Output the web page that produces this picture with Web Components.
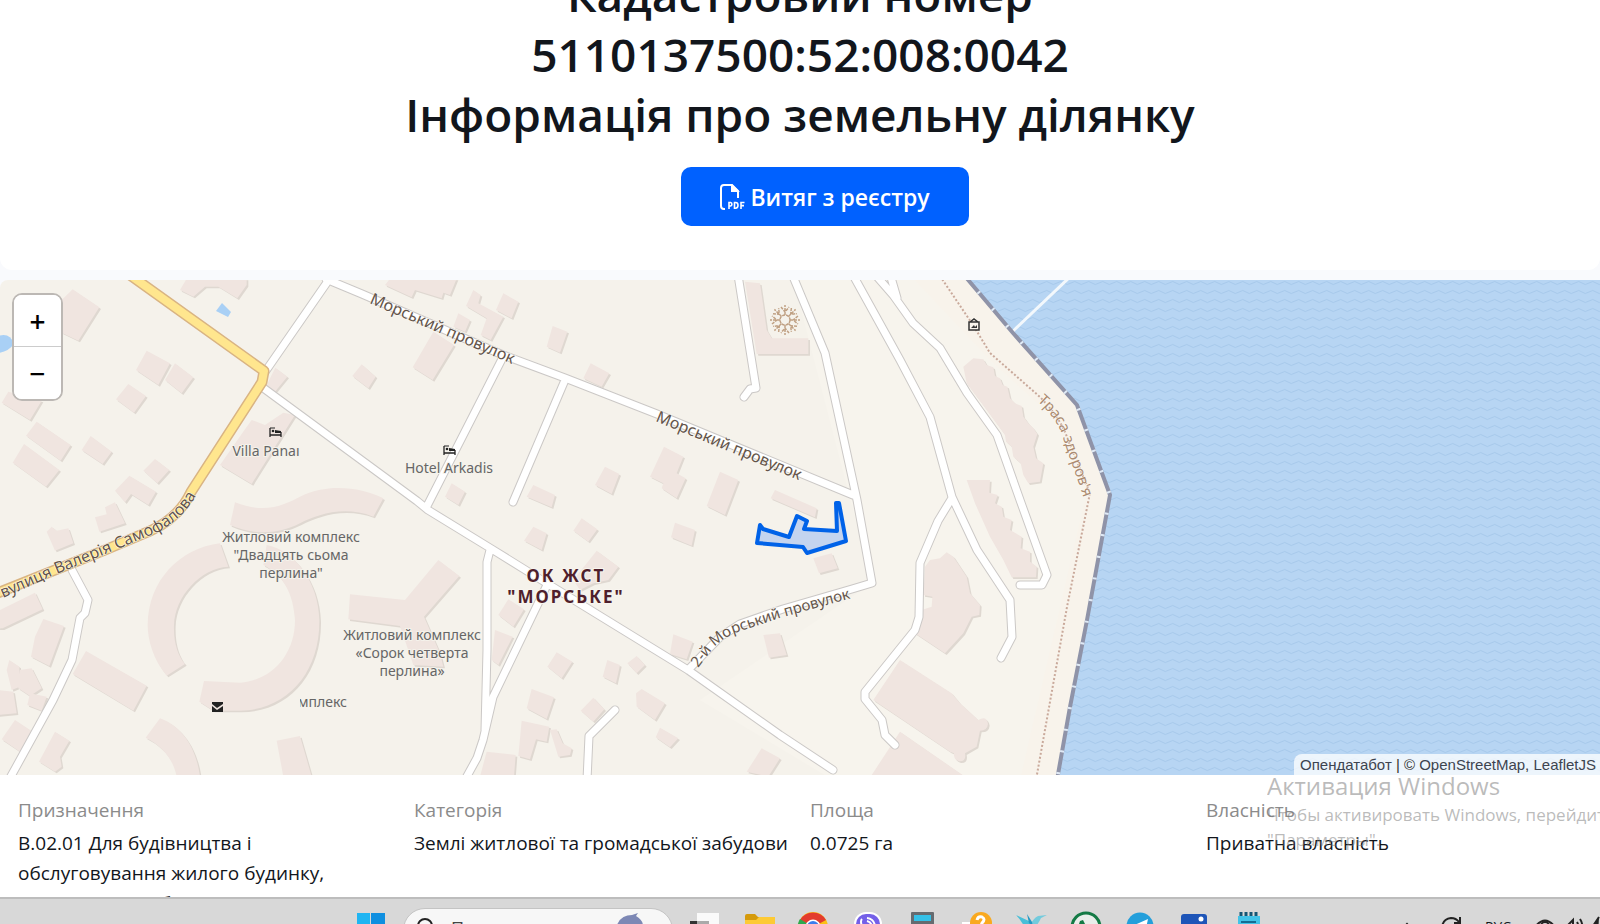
<!DOCTYPE html>
<html lang="uk">
<head>
<meta charset="utf-8">
<meta name="viewport" content="width=device-width, initial-scale=1">
<title>Кадастровий номер 5110137500:52:008:0042</title>
<style>
    body {
        margin: 0;
        height: 100vh;
        overflow: hidden;
        display: flex;
        flex-direction: column;
        background: #fff;
        color: #12161c;
        font-family: "Open Sans", "Noto Sans", sans-serif;
    }
    main {
        flex: 1;
        min-height: 0;
        overflow: hidden;
        background: #f9fafd;
    }
</style>
</head>
<body>
<main>
    <parcel-header>
        <span slot="title">Кадастровий номер<br>5110137500:52:008:0042<br>Інформація про земельну ділянку</span>
        <span slot="action">Витяг з реєстру</span>
    </parcel-header>
    <parcel-map></parcel-map>
    <info-grid>
        <info-item label="Призначення">В.02.01 Для будівництва і обслуговування жилого будинку, господарських будівель і споруд</info-item>
        <info-item label="Категорія">Землі житлової та громадської забудови</info-item>
        <info-item label="Площа">0.0725 га</info-item>
        <info-item label="Власність">Приватна власність</info-item>
    </info-grid>
</main>
<activation-notice></activation-notice>
<task-bar></task-bar>

<script>
class ParcelHeader extends HTMLElement {
    constructor() {
        super();
        this.attachShadow({ mode: 'open' });
    }

    connectedCallback() {
        this.shadowRoot.innerHTML = `
            <style>
                :host {
                    display: flex;
                    flex-direction: column;
                    align-items: center;
                    padding-bottom: 44px;
                    margin-bottom: 10px;
                    background: #fff;
                    border-radius: 0 0 12px 12px;
                }
                h1 {
                    margin: -36px 0 23px;
                    font-size: 46px;
                    line-height: 60px;
                    font-weight: 600;
                    text-align: center;
                }
                button {
                    display: flex;
                    align-items: center;
                    gap: 5px;
                    margin-left: 50px;
                    padding: 0 39px;
                    height: 59px;
                    border: 0;
                    border-radius: 10px;
                    background: #0061ff;
                    color: #fff;
                    font: 600 23px "Open Sans", "Noto Sans", sans-serif;
                }
                svg { width: 25px; height: 26px; }
            </style>
            <h1><slot name="title"></slot></h1>
            <button type="button">
                <svg viewBox="0 0 25 26" fill="none" stroke="#fff" stroke-width="2" aria-hidden="true">
                    <path d="M5 25H4Q1 25 1 22V4Q1 1 4 1H12L18 7V14M12 1V7H18"/>
                    <path d="M12 1.500L17.500 7H12Z" fill="#fff"/>
                    <path stroke-width="1.600" d="M9 25V18.500H10.500A1.800 1.800 0 0 1 10.500 22H9M14.500 18.500V24.200H15.500Q18 24.200 18 21.300T15.500 18.500ZM21 25V18.500H24.500M21 21.600H24"/>
                </svg>
                <slot name="action"></slot>
            </button>
        `;
    }
}

customElements.define('parcel-header', ParcelHeader);

class ZoomControl extends HTMLElement {
    constructor() {
        super();
        this.attachShadow({ mode: 'open' });
    }

    connectedCallback() {
        this.shadowRoot.innerHTML = `
            <style>
                :host {
                    display: flex;
                    flex-direction: column;
                    border: 2px solid #bcb8b4;
                    border-radius: 10px;
                    background: #fff;
                    overflow: hidden;
                }
                button {
                    width: 47px;
                    height: 52px;
                    padding: 0;
                    border: 0;
                    background: #fff;
                    color: #000;
                    font: 600 28px/46px "Open Sans", "Noto Sans", sans-serif;
                }
                button:first-of-type { border-bottom: 1px solid #ccc; }
            </style>
            <button type="button" aria-label="Збільшити">+</button>
            <button type="button" aria-label="Зменшити">−</button>
        `;
    }
}

customElements.define('zoom-control', ZoomControl);

// Building outlines, grouped by tile. Points are in tile units, three per map unit.
const tiles = [
    { x: 0, y: 270, shapes: [
        'M218 58L298 112L235 212L185 188V90Z',
        'M440 242L510 280L475 345L408 300Z',
        'M525 280L580 322L545 370L495 330Z',
        'M385 342L438 378L402 428L348 388Z',
        'M25 365L125 392L90 450L5 398Z',
        'M110 455L212 525L182 572L78 497Z',
        'M72 522L178 600L138 650L38 578Z',
        'M272 498L335 545L308 582L245 540Z',
        'M465 567L508 600L472 640L430 602Z',
        'M388 617L468 665L445 705L393 672L375 697L345 662Z',
        'M345 697L375 760L298 785L285 742L320 733L315 712Z',
        'M560 26H740V45L712 85L655 50L615 50L580 80L540 60Z',
        'M826 293L862 320L825 365L800 345Z',
        'M1085 283L1127 320L1105 355L1057 318Z',
        'M735 478L755 450L795 465L850 428L885 435L755 642L660 585Z',
        'M705 697C800 735 860 700 900 680C980 640 1080 650 1150 685L1120 740C1030 705 950 735 900 760C830 795 760 795 690 765Z'
    ] },
    { x: 360, y: 270, shapes: [
        'M90 26H290L270 75L250 68L245 85L165 60L155 82L75 45Z',
        'M430 70L475 95L455 145L408 120Z',
        'M340 60L362 75L355 100L430 140L392 210L362 195L380 145L318 108Z',
        'M295 130L330 150L315 185L280 170Z',
        'M220 185L282 225L218 330L158 292Z',
        'M578 168L622 185L600 248L560 230Z',
        'M692 280L748 310L725 350L670 325Z',
        'M912 530L970 560L950 610L977 625L950 685L905 655L910 640L870 620Z',
        'M735 590L778 612L755 672L705 645Z',
        'M1080 605L1135 630L1095 735L1040 708Z',
        'M520 645L585 675L575 712L500 680Z',
        'M275 640L315 665L295 705L255 680Z'
    ] },
    { x: 700, y: 270, shapes: [
        'M135 35L180 40L200 180L215 205H325V252H170Z',
        'M225 660L350 715L345 742L212 685Z',
        'M820 265L850 268L860 285L880 292L885 318L900 325L908 345L922 350L930 385L945 400L965 408L970 440L985 460L1000 475L1012 492L1000 530L1008 565L1030 580L1020 635L985 640L970 615L962 580L940 560L935 530L918 515L915 495L860 420L800 340L790 290Z',
        'M800 630H870L868 668L893 675L885 700L905 710L910 740L935 750L930 780L965 800L962 835L990 845V875L1010 890L1008 922H935L910 870L870 800L825 700Z'
    ] },
    { x: 0, y: 500, shapes: [
        'M660 130L685 200C600 205 525 290 522 375C520 430 535 470 555 492L500 527C460 480 443 420 443 375C445 240 540 145 660 130Z',
        'M800 135C880 150 955 240 958 360C960 520 860 630 720 632H640L598 605L612 543L720 548C820 540 885 460 885 360C880 280 850 225 790 195Z',
        'M0 330L105 278L128 328L8 385H-5Z',
        'M130 357L192 378L148 498L93 470L105 410Z',
        'M258 453L440 557L400 632L218 522Z',
        'M28 480L58 500L60 560L35 570L20 510Z',
        'M60 510L95 505L125 565L90 588L55 565Z',
        'M90 580L140 590L125 632L82 615Z',
        'M-5 570L40 575L50 640L-5 645Z',
        'M45 660L105 700L60 755L5 718Z',
        'M165 695L208 722L180 770L185 800L165 815L117 785Z',
        'M480 655C550 680 590 750 600 830H530C520 780 490 740 437 713Z',
        'M830 722L900 708L935 830H850Z',
        'M155 80L170 92L205 85L220 130L165 152L140 95Z',
        'M1050 283L1215 300L1315 180L1378 228L1272 350L1320 460L1330 500L1240 495L1200 378L1045 358Z'
    ] },
    { x: 360, y: 500, shapes: [
        'M520 80L560 100L545 150L492 122Z',
        'M665 55L712 88L685 125L640 92Z',
        'M945 68L1005 90L995 137L933 112Z',
        'M710 152L775 200L745 240L700 250L660 270L640 240Z',
        'M445 298L492 328L460 380L415 345Z',
        'M405 390L458 410L415 495L395 480Z',
        'M590 457L637 485L605 535L562 500Z',
        'M742 480L780 495L768 550L728 530Z',
        'M830 468L855 495L830 520L802 490Z',
        'M515 567L582 592L560 657L500 625Z',
        'M700 593L733 628L700 665L662 632Z',
        'M845 567L915 610L885 660L830 620L828 580Z',
        'M485 662L568 680L560 725L528 718L510 778L475 768Z',
        'M590 688L608 730L635 745L630 765L595 770L570 690Z',
        'M900 683L955 715L930 742L887 712Z',
        'M940 403L998 425L980 478L930 462Z',
        'M380 755L467 765L462 830H360Z',
        'M1205 745L1260 775L1225 830L1160 815Z'
    ] },
    { x: 700, y: 500, shapes: [
        'M340 175L395 160L413 205L357 220Z',
        'M190 405L240 400L260 465L207 473Z',
        'M690 180L720 175L740 157L760 170L800 230L810 280L840 315L838 345L815 350L790 400L735 460L645 400L665 330L695 320L697 290L670 285L675 200Z',
        'M600 480L755 580L780 610L835 660Q860 645 864 672Q862 692 840 692L830 740L795 760Q800 785 778 784Q760 780 762 760L750 755L520 600Z',
        'M600 695L795 830H512Z'
    ] }
];

const roads = [
    'M265 372L328 281',
    'M326 279L362 294L503 355L565 378L657 414L853 495',
    'M262 387L417 501L428 510L490 548L548 584L688 670L780 735L833 770',
    'M426 508L503 357',
    'M565 380L513 502',
    'M490 550L487 562L487 650L485 730',
    'M547 585L493 697L483 740L477 758L466 778',
    'M615 710L589 736L587 780',
    'M738 275L756 388L750 389L744 397',
    'M792 274L825 353L857 500L872 583L852 589L783 609L740 624L720 637L688 670',
    'M853 275L900 360L930 417L952 497L977 550L1010 600L1012 637L1001 658',
    'M873 272L893 295L913 323L940 348L967 393L997 435L1020 500L1047 575L1042 585L1020 585',
    'M890 274L897 298',
    'M952 498L938 521L920 563L919 617L915 630L865 692L865 699L882 720L885 735L895 745',
    'M72 570L88 600L85 613L80 618L72 660L53 700L10 778'
];

const mainRoad = 'M130 275L264 371L262 382L191 492Q179 518 150 531L105 550L-5 594';
const coast = 'M964 275L1013 333L1077 405L1110 495L1087 620L1070 707L1057 780';
const trail = 'M940 276L973 325L990 353L1040 397Q1062 420 1068 440L1090 493L1067 607L1036 780';

const bed = '<path d="M-5 -4V5M-5 3H6M6 5V0" fill="none" stroke="#222" stroke-width="1.300"/><circle cx="-2" cy="-1" r="1.300" fill="#222"/><path d="M0 -2L6 -1V1H0Z" fill="#222"/><path d="M-5 -4H0" stroke="#222"/>';

class ParcelMap extends HTMLElement {
    constructor() {
        super();
        this.attachShadow({ mode: 'open' });
    }

    drawBuildings() {
        return tiles.map(tile => `
            <g transform="translate(${tile.x} ${tile.y}) scale(0.33333)">
                <path d="${tile.shapes.join('')}" transform="translate(5 5)" fill="#dfd8d1"/>
                <path d="${tile.shapes.join('')}" fill="#f0e5e0"/>
            </g>`).join('');
    }

    drawRosette() {
        let spokes = '';
        for (let angle = 0; angle < 360; angle += 45) {
            spokes += `<path transform="rotate(${angle})" d="M0 -5V-15M-4 -13L0 -8L4 -13"/>`;
        }
        return spokes;
    }

    connectedCallback() {
        this.shadowRoot.innerHTML = `
            <style>
                :host { display: block; position: relative; }
                .map {
                    display: block;
                    width: 100%;
                    height: auto;
                    border-radius: 8px 0 0 0;
                    font-family: "Noto Sans", sans-serif;
                }
                zoom-control { position: absolute; top: 13px; left: 12px; }
                .casing, .road { fill: none; stroke-linecap: round; stroke-linejoin: round; }
                .casing { stroke: #cbc8c6; stroke-width: 9px; }
                .road { stroke: #fff; stroke-width: 7px; }
                .casing.main { stroke: #d9b483; stroke-width: 11px; }
                .road.main { stroke: #ffe68e; stroke-width: 8px; }
                .poi { font-size: 14px; fill: #666; text-anchor: middle; stroke: #f5f2eb; stroke-width: 2px; paint-order: stroke; }
                .street { font-size: 16px; fill: #63544a; stroke: #fdfbf6; stroke-width: 1px; paint-order: stroke; }
                .street .small { font-size: 15px; }
                .street .path { fill: #ab8a70; }
                .district { font-size: 17px; font-weight: 700; letter-spacing: 2px; fill: #4f1f2c; text-anchor: middle; stroke: #f8f5ef; stroke-width: 2px; paint-order: stroke; }
                .attribution {
                    position: absolute;
                    right: 0;
                    bottom: 0;
                    padding: 0 4px 0 6px;
                    border-radius: 8px 0 0 0;
                    background: rgba(255, 255, 255, 0.75);
                    color: #333;
                    font: 15px/21px "Liberation Sans", Arial, sans-serif;
                }
                a { color: #3d4450; text-decoration: none; }
            </style>
            <svg class="map" viewBox="0 280 1600 495" role="img" aria-label="Мапа ділянки">
                <defs>
                    <pattern id="waves" width="14" height="9" patternUnits="userSpaceOnUse">
                        <rect width="14" height="9" fill="#b7d5f3"/>
                        <path d="M0 4Q3 7 7 4T14 4" fill="none" stroke="#a7c9eb" stroke-width="1"/>
                    </pattern>
                    <path id="line1" d="M369 303L512 364"/>
                    <path id="line2" d="M655 421L830 493"/>
                    <path id="line3" d="M3 598L57 574L113 551L158 532Q184 518 197 494"/>
                    <path id="line4" d="M698 668L711 651Q720 640 735 633L783 617L870 593"/>
                    <path id="line5" d="M1037 401Q1059 420 1064 441L1088 510"/>
                    <clipPath id="cut"><rect x="300" y="690" width="60" height="24"/></clipPath>
                </defs>
                <rect y="275" width="1600" height="505" fill="#f5f2eb"/>
                <path d="M792 275L872 583L700 700L833 780H1057L1110 495L1077 405L964 275Z" fill="#f7f4ed"/>
                <path d="M910 275H964L1077 405L1110 495L1057 780H1020L1086 495L1056 420L990 360Z" fill="#f8f3eb"/>
                <path d="${coast}H1610V275Z" fill="url(#waves)"/>
                <path d="M1012 332L1072 275" stroke="#f3f8fc" stroke-width="3"/>
                <path d="M222 303L231 312L228 317L216 311Z" fill="#a9d0f5"/>
                <path d="M-2 336Q10 332 14 344Q8 352 -2 353Z" fill="#a9d0f5"/>
                ${this.drawBuildings()}
                <path d="${coast}" fill="none" stroke="#8f93a8" stroke-width="4"/>
                <path d="${coast}" fill="none" stroke="#dfe9f5" stroke-width="4" stroke-dasharray="2 20"/>
                <path d="${trail}" fill="none" stroke="#c9a99b" stroke-width="2" stroke-dasharray="2 2"/>
                <path class="casing" d="${roads.join('')}"/>
                <path class="road" d="${roads.join('')}"/>
                <path class="casing main" d="${mainRoad}"/>
                <path class="road main" d="${mainRoad}"/>
                <g transform="translate(785 320)" fill="none" stroke="#c0a184" stroke-width="1.500" stroke-dasharray="3 1">
                    <circle r="5"/>${this.drawRosette()}
                </g>
                <g class="street">
                    <text><textPath href="#line1">Морський провулок</textPath></text>
                    <text><textPath href="#line2">Морський провулок</textPath></text>
                    <text><textPath href="#line3">вулиця Валерія Самофалова</textPath></text>
                    <text class="small"><textPath href="#line4">2-й Морський провулок</textPath></text>
                    <text class="small path"><textPath href="#line5">Траса здоров'я</textPath></text>
                </g>
                <g class="poi">
                    <text x="266" y="456">Villa Panaı</text>
                    <text x="449" y="473">Hotel Arkadis</text>
                    <text x="291" y="542">Житловий комплекс</text>
                    <text x="291" y="560">"Двадцять сьома</text>
                    <text x="291" y="578">перлина"</text>
                    <text x="412" y="640">Житловий комплекс</text>
                    <text x="412" y="658">«Сорок четверта</text>
                    <text x="412" y="676">перлина»</text>
                    <g clip-path="url(#cut)"><text x="347" y="707" style="text-anchor: end">мплекс</text></g>
                </g>
                <g class="district">
                    <text x="566" y="582">ОК ЖСТ</text>
                    <text x="566" y="603">"МОРСЬКЕ"</text>
                </g>
                <g transform="translate(275 432)">${bed}</g>
                <g transform="translate(449 450)">${bed}</g>
                <g transform="translate(974 325)" fill="none" stroke="#333" stroke-width="1.500">
                    <path d="M-5 -3H5V5H-5ZM-4 -3L0 -6L4 -3" fill="#f9f4ec"/><path d="M-3 3L0 0L1 2L3 0V3Z" fill="#333" stroke="none"/>
                </g>
                <g transform="translate(217 707)"><path d="M-5 -5H6V-3L0 1L-5 -3ZM-5 -1L0 3L6 -1V5H-5Z" fill="#222"/></g>
                <path d="M760 525L763 529L789 537L797 516L807 521L804 529L837 531L836 503L839 503L846 541L807 553L803 547L757 543Z" fill="#0061ff" fill-opacity="0.2" stroke="#0062e8" stroke-width="4" stroke-linejoin="round"/>
            </svg>
            <zoom-control></zoom-control>
            <div class="attribution"><a href="#">Опендатабот</a> | © <a href="#">OpenStreetMap</a>, <a href="#">LeafletJS</a></div>
        `;
    }
}

customElements.define('parcel-map', ParcelMap);

class InfoGrid extends HTMLElement {
    constructor() {
        super();
        this.attachShadow({ mode: 'open' });
    }

    connectedCallback() {
        this.shadowRoot.innerHTML = `
            <style>
                :host {
                    display: grid;
                    grid-template-columns: repeat(4, 1fr);
                    padding: 20px 8px;
                    background: #fff;
                }
            </style>
            <slot></slot>
        `;
    }
}

customElements.define('info-grid', InfoGrid);

class InfoItem extends HTMLElement {
    constructor() {
        super();
        this.attachShadow({ mode: 'open' });
    }

    connectedCallback() {
        this.shadowRoot.innerHTML = `
            <style>
                :host {
                    display: block;
                    padding: 0 8px 0 10px;
                    font-size: 19px;
                    line-height: 30px;
                }
                .label { margin-bottom: 3px; color: #8b8b8b; }
            </style>
            <div class="label">${this.getAttribute('label')}</div>
            <div><slot></slot></div>
        `;
    }
}

customElements.define('info-item', InfoItem);

class ActivationNotice extends HTMLElement {
    constructor() {
        super();
        this.attachShadow({ mode: 'open' });
    }

    connectedCallback() {
        this.shadowRoot.innerHTML = `
            <style>
                :host {
                    position: absolute;
                    right: 0;
                    bottom: 72px;
                    width: 333px;
                    overflow: hidden;
                    white-space: nowrap;
                    color: rgba(120, 120, 120, 0.5);
                    pointer-events: none;
                }
                strong { display: block; font-size: 24px; line-height: 32px; font-weight: 400; }
                p { margin: 0; font-size: 17px; line-height: 25px; }
            </style>
            <strong>Активация Windows</strong>
            <p>Чтобы активировать Windows, перейдите в раздел<br>"Параметры".</p>
        `;
    }
}

customElements.define('activation-notice', ActivationNotice);

// Taskbar apps, each drawn on a 32x32 grid
const apps = [
    { name: 'Представление задач', icon: '<path d="M1 8H20V30H1Z" fill="#333"/><path d="M8 0H30V22H8Z" fill="#fafafa"/><path d="M8 8H20V22H8Z" fill="#aaa"/>' },
    { name: 'Проводник', icon: '<path d="M1 3Q1 1 3 1H11L14 4H31V10H1Z" fill="#d59a0b"/><path d="M1 7H12L15 4H31V28H1Z" fill="#fdca35"/>' },
    { name: 'Chrome', icon: '<circle cx="15" cy="14" r="15" fill="#fbc116"/><path d="M15 14L2 7A15 15 0 0 1 28 7Z" fill="#e33b2e"/><path d="M15 14L2 6A15 15 0 0 0 12 29Z" fill="#2da94f"/><circle cx="15" cy="14" r="7.500" fill="#fff"/><circle cx="15" cy="14" r="6" fill="#3b7ded"/>' },
    { name: 'Viber', icon: '<rect x="2" y="-1" width="28" height="30" rx="12" fill="#fff"/><rect x="4" y="1" width="24" height="26" rx="10" fill="#7460e8"/><path d="M10 6Q8 8 10 13Q14 20 20 22M15 5Q22 6 23 13M15 8Q19 9 20 13" fill="none" stroke="#fff" stroke-width="2"/>' },
    { name: 'Калькулятор', icon: '<rect x="4" y="-1" width="23" height="31" rx="1" fill="#666b70"/><path d="M7 2H24V8H7Z" fill="#35c1e8"/><path d="M7 11H12V15H7ZM13 11H18V15H13ZM19 11H24V15H19Z" fill="#dfe3e6"/>' },
    { name: 'Справка', icon: '<path d="M1 9H12V20H1Z" fill="#fff"/><circle cx="20" cy="10" r="11" fill="#f9a91f"/><path d="M16 7Q17 3 21 4Q25 6 21 10L20 13" fill="none" stroke="#fff" stroke-width="3"/>' },
    { name: 'Колибри', icon: '<path d="M1 2L16 9L12 20Q8 9 1 2Z" fill="#49bfd8"/><path d="M15 20Q14 8 23 3L32 2L26 5Q23 12 15 20Z" fill="#73cbdd"/><path d="M12 1L17 9L18 14L14 10Z" fill="#2599c4"/>' },
    { name: 'WhatsApp', icon: '<circle cx="16" cy="14" r="14" fill="#e9eeea" stroke="#147a45" stroke-width="3"/><path d="M10 8L13 7L15 11L13 13Q16 17 20 19L21 21Q10 20 9 11Z" fill="#147a45"/>' },
    { name: 'Telegram', icon: '<circle cx="16" cy="13" r="13.500" fill="#249fdb"/><path d="M6 14L24 6L21 20L15 17L12 20V15Z" fill="#fff"/>' },
    { name: 'Фотографии', icon: '<rect x="3" y="1" width="26" height="27" rx="3" fill="#1e55b8"/><path d="M4 20L13 11L27 26H4Z" fill="#3a8ee6"/><circle cx="23" cy="6" r="2.500" fill="#fff"/>' },
    { name: 'Блокнот', icon: '<path d="M5 3H27V30H5Z" fill="#42c3e8"/><path d="M8 -1V3M13 -1V3M18 -1V3M23 -1V3" stroke="#155675" stroke-width="3"/><path d="M8 9H23M8 14H23" stroke="#156d93" stroke-width="2"/>' }
];

class TaskBar extends HTMLElement {
    constructor() {
        super();
        this.attachShadow({ mode: 'open' });
    }

    connectedCallback() {
        const buttons = apps.map(app => `
            <button type="button" aria-label="${app.name}"><svg viewBox="0 0 32 32">${app.icon}</svg></button>`).join('');

        this.shadowRoot.innerHTML = `
            <style>
                :host {
                    display: grid;
                    grid-template-columns: 1fr auto 1fr;
                    box-sizing: border-box;
                    height: 27px;
                    padding-left: 20px;
                    overflow: hidden;
                    background: #d8d8d8;
                    border-top: 2px solid #bdbdbd;
                }
                nav { grid-column: 2; display: flex; align-items: flex-start; gap: 5px; }
                svg { display: block; width: 32px; height: 32px; overflow: visible; }
                button {
                    display: flex;
                    justify-content: center;
                    width: 54px;
                    padding: 14px 0 0;
                    border: 0;
                    background: none;
                }
                .apps { display: flex; justify-content: space-around; width: 598px; }
                label {
                    display: flex;
                    gap: 8px;
                    box-sizing: border-box;
                    width: 270px;
                    height: 44px;
                    margin-top: 9px;
                    padding: 8px 28px 0 13px;
                    border: 1px solid #c4c4c4;
                    border-radius: 22px;
                    background: #f7f7f7;
                }
                label svg { flex: none; width: 26px; height: 26px; }
                input {
                    flex: 1;
                    min-width: 0;
                    height: 22px;
                    padding: 0;
                    border: 0;
                    background: none;
                    font: 18px/22px "Open Sans", sans-serif;
                }
                input::placeholder { color: #444; }
                .tray {
                    display: flex;
                    justify-content: flex-end;
                    align-items: flex-start;
                    gap: 24px;
                    padding-top: 18px;
                    font-size: 14px;
                    line-height: 20px;
                }
                .tray svg { flex: none; width: 20px; height: 20px; fill: none; stroke: #222; stroke-width: 2px; }
                .status { display: flex; gap: 9px; width: 65px; }
            </style>
            <nav>
                <button type="button" aria-label="Пуск">
                    <svg viewBox="0 0 32 32"><path d="M2 0H15V14H2ZM2 16H15V30H2Z" fill="#20b5f2"/><path d="M16 0H30V14H16ZM16 16H30V30H16Z" fill="#0f8fe0"/></svg>
                </button>
                <label>
                    <svg viewBox="0 0 26 26" fill="none" stroke="#222" stroke-width="2"><circle cx="8" cy="9" r="7"/><path d="M13 14L20 21"/></svg>
                    <input type="search" placeholder="Поиск" aria-label="Поиск">
                    <svg viewBox="0 0 26 26"><path d="M0 6Q4 -2 14 -2L20 -4L18 -1Q25 3 25 9L26 15L20 10L14 7L9 8L8 13L5 8L-2 9Z" fill="#7d88b5"/></svg>
                </label>
                <div class="apps">${buttons}</div>
            </nav>
            <div class="tray">
                <svg viewBox="0 0 20 20"><path d="M5 12L10 7L15 12"/></svg>
                <svg viewBox="0 0 20 20"><path d="M1 12Q1 2 10 1Q15 1 18 5M19 0V6H13"/></svg>
                <span>РУС</span>
                <div class="status">
                    <svg viewBox="0 0 20 20"><path d="M0 10Q10 -3 20 10"/><circle cx="10" cy="9" r="4"/></svg>
                    <svg viewBox="0 0 20 20"><path d="M0 8H4L9 3V17M13 5Q15 8 13 12M16 2Q20 8 17 15"/></svg>
                    <svg viewBox="0 0 20 20"><path d="M6 0L0 9H5V18" fill="#222"/></svg>
                </div>
            </div>
        `;
    }
}

customElements.define('task-bar', TaskBar);
</script>
</body>
</html>
